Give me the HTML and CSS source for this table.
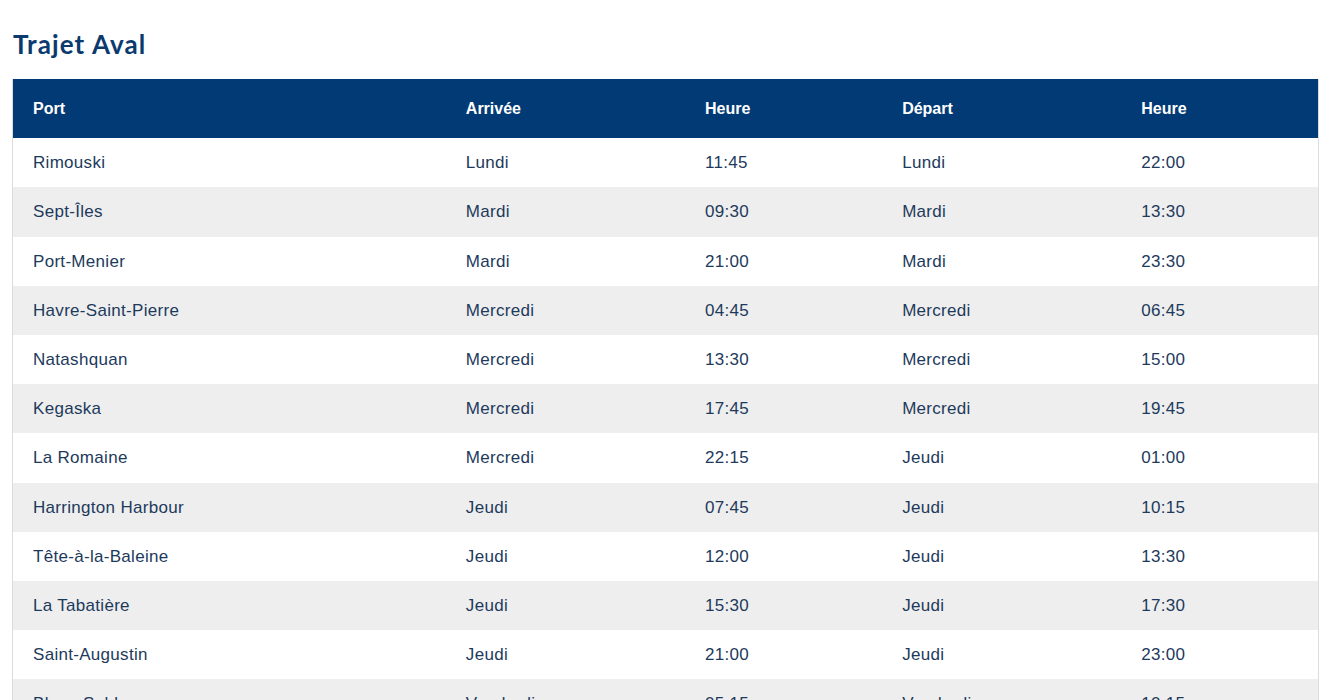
FILE: index.html
```html
<!DOCTYPE html>
<html lang="fr">
<head>
<meta charset="utf-8">
<title>Trajet Aval</title>
<link rel="stylesheet" href="styles.css">
</head>
<body>
<div class="page">
  <h2 class="title">Trajet Aval</h2>
  <table class="schedule">
    <thead>
      <tr>
        <th class="c-port">Port</th>
        <th class="c-arr">Arrivée</th>
        <th class="c-h1">Heure</th>
        <th class="c-dep">Départ</th>
        <th class="c-h2">Heure</th>
      </tr>
    </thead>
    <tbody>
      <tr><td>Rimouski</td><td>Lundi</td><td>11:45</td><td>Lundi</td><td>22:00</td></tr>
      <tr><td>Sept-Îles</td><td>Mardi</td><td>09:30</td><td>Mardi</td><td>13:30</td></tr>
      <tr><td>Port-Menier</td><td>Mardi</td><td>21:00</td><td>Mardi</td><td>23:30</td></tr>
      <tr><td>Havre-Saint-Pierre</td><td>Mercredi</td><td>04:45</td><td>Mercredi</td><td>06:45</td></tr>
      <tr><td>Natashquan</td><td>Mercredi</td><td>13:30</td><td>Mercredi</td><td>15:00</td></tr>
      <tr><td>Kegaska</td><td>Mercredi</td><td>17:45</td><td>Mercredi</td><td>19:45</td></tr>
      <tr><td>La Romaine</td><td>Mercredi</td><td>22:15</td><td>Jeudi</td><td>01:00</td></tr>
      <tr><td>Harrington Harbour</td><td>Jeudi</td><td>07:45</td><td>Jeudi</td><td>10:15</td></tr>
      <tr><td>Tête-à-la-Baleine</td><td>Jeudi</td><td>12:00</td><td>Jeudi</td><td>13:30</td></tr>
      <tr><td>La Tabatière</td><td>Jeudi</td><td>15:30</td><td>Jeudi</td><td>17:30</td></tr>
      <tr><td>Saint-Augustin</td><td>Jeudi</td><td>21:00</td><td>Jeudi</td><td>23:00</td></tr>
      <tr><td>Blanc-Sablon</td><td>Vendredi</td><td>05:15</td><td>Vendredi</td><td>10:15</td></tr>
    </tbody>
  </table>
</div>
</body>
</html>
```

FILE: styles.css
```css
html, body {
  margin: 0;
  padding: 0;
  background: #ffffff;
}

.page {
  padding: 28px 15px 20px 12px;
}

.title {
  margin: 0 0 19px 1px;
  font-family: "Lato", "Liberation Sans", sans-serif;
  font-weight: 700;
  font-size: 26px;
  letter-spacing: 1.1px;
  line-height: 32px;
  color: #0b3a6e;
}

.schedule {
  width: 1307px;
  border-collapse: collapse;
  table-layout: fixed;
  border-left: 1px solid #dcdcdc;
  border-right: 1px solid #dcdcdc;
  font-family: "Liberation Sans", Arial, sans-serif;
  font-size: 16px;
}

.schedule th,
.schedule td {
  box-sizing: border-box;
  text-align: left;
  padding: 15px 20px;
  line-height: 19.2px;
  white-space: nowrap;
}

.schedule thead tr {
  background: #013a75;
}

.schedule th {
  color: #ffffff;
  font-weight: 700;
  padding-top: 20px;
  padding-bottom: 20px;
}

.schedule td {
  color: #1d3a5c;
  font-size: 17px;
  letter-spacing: 0.3px;
}

.schedule tbody tr:nth-child(even) {
  background: #eeeeee;
}

.c-port { width: 433px; }
.c-arr { width: 239px; }
.c-h1 { width: 197px; }
.c-dep { width: 239px; }
.c-h2 { width: 197px; }
```
